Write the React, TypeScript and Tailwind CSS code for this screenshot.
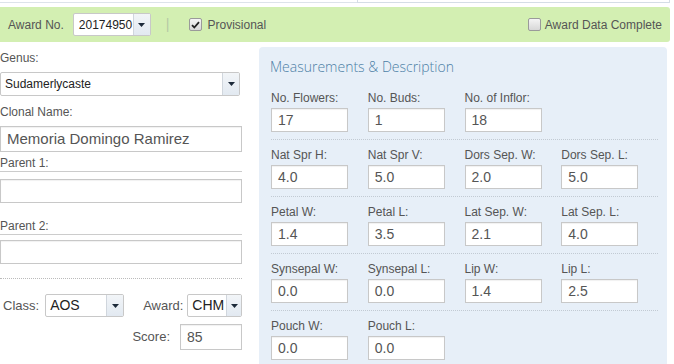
import React from "react";

const Caret = () => (
  <svg width="7" height="4" viewBox="0 0 7 4"><path d="M0 0h7L3.5 4z" fill="#1d2a3a" /></svg>
);

function Select({ value, w, h = 24, text = "text-[13px]", btn = 17, pl = "pl-[4px]" }: { value: string; w: string; h?: number; text?: string; btn?: number; pl?: string }) {
  return (
    <div className={`flex ${w} border border-[#c8c8c8] bg-white rounded-[2px] overflow-hidden`} style={{ height: h }}>
      <div className={`flex-1 flex items-center ${pl} ${text} text-[#222] overflow-hidden whitespace-nowrap`}>{value}</div>
      <div className="flex items-center justify-center border-l border-[#d0d6dd] bg-gradient-to-b from-[#f2f5f8] to-[#e2e9f1]" style={{ width: btn }}>
        <Caret />
      </div>
    </div>
  );
}

function Input({ value = "", w = "w-full", h = 24, text = "text-[14px]" }: { value?: string; w?: string; h?: number; text?: string }) {
  return (
    <div className={`${w} border border-[#c8c8c8] bg-white flex items-center pl-[6px] ${text} text-[#555] shadow-[inset_0_1px_1px_rgba(0,0,0,0.06)]`} style={{ height: h }}>
      {value}
    </div>
  );
}

function Checkbox({ checked }: { checked?: boolean }) {
  return (
    <div className="w-[13px] h-[13px] rounded-[2px] border border-[#9a9a9a] bg-gradient-to-b from-[#f4f4f4] to-[#d8d8d8] flex items-center justify-center">
      {checked && (
        <svg width="9" height="8" viewBox="0 0 9 8"><path d="M1 4.2l2.3 2.3L8 1.2" stroke="#222" strokeWidth="1.8" fill="none" /></svg>
      )}
    </div>
  );
}

const rows: [string, string][][] = [
  [["No. Flowers:", "17"], ["No. Buds:", "1"], ["No. of Inflor:", "18"]],
  [["Nat Spr H:", "4.0"], ["Nat Spr V:", "5.0"], ["Dors Sep. W:", "2.0"], ["Dors Sep. L:", "5.0"]],
  [["Petal W:", "1.4"], ["Petal L:", "3.5"], ["Lat Sep. W:", "2.1"], ["Lat Sep. L:", "4.0"]],
  [["Synsepal W:", "0.0"], ["Synsepal L:", "0.0"], ["Lip W:", "1.4"], ["Lip L:", "2.5"]],
  [["Pouch W:", "0.0"], ["Pouch L:", "0.0"]],
];

export default function App() {
  return (
    <div className="w-[674px] h-[364px] overflow-hidden bg-white text-[#555] font-['Liberation_Sans',Arial,sans-serif]">
      {/* top strip */}
      <div className="h-[7px] flex">
        <div className="flex-1 h-[3px] border-b border-[#dde3ea]" />
        <div className="w-[313px] h-[3px] border-l border-b border-r border-[#d5dde6] mr-[4px]" />
      </div>
      {/* green bar */}
      <div className="h-[35px] mr-[4px] bg-[#d3efb2] rounded-r-[3px] flex items-center text-[12px]">
        <span className="ml-[8px] text-[#555]">Award No.</span>
        <div className="ml-[9px]">
          <Select value="20174950" w="w-[78px]" h={23} text="text-[12px]" pl="pl-[5px]" btn={17} />
        </div>
        <span className="ml-[15px] text-[#b5c9a5] text-[14px]">|</span>
        <div className="ml-[20px]"><Checkbox checked /></div>
        <span className="ml-[5px] text-[#555]">Provisional</span>
        <div className="flex-1" />
        <Checkbox />
        <span className="ml-[4px] mr-[8px] text-[#555]">Award Data Complete</span>
      </div>

      <div className="flex mt-[5px]">
        {/* left column */}
        <div className="w-[242px] text-[12px]">
          <div className="h-[16px] leading-[16px] mt-[3px] mb-[6px]">Genus:</div>
          <Select value="Sudamerlycaste" w="w-[240px]" h={24} text="text-[12px]" btn={17} />
          <div className="h-[16px] leading-[16px] mt-[8px] mb-[6px]">Clonal Name:</div>
          <Input value="Memoria Domingo Ramirez" h={26} text="text-[15px]" />
          <div className="h-[17px] leading-[16px] mt-[3px] mb-[7px] border-b border-[#ccc]">Parent 1:</div>
          <Input h={24} />
          <div className="h-[17px] leading-[16px] mt-[15px] mb-[5px] border-b border-[#ccc]">Parent 2:</div>
          <Input h={24} />
          <div className="mt-[14px] border-b border-dotted border-[#bbb]" />
          <div className="flex items-center mt-[15px] h-[23px]">
            <span className="ml-[3px] text-[13px]">Class:</span>
            <div className="ml-[6px]"><Select value="AOS" w="w-[79px]" h={23} text="text-[14px]" btn={17} /></div>
            <span className="ml-[19px] text-[13px]">Award:</span>
            <div className="ml-[4px]"><Select value="CHM" w="w-[55px]" h={23} text="text-[14px]" btn={15} /></div>
          </div>
          <div className="flex items-center justify-end mt-[7px]">
            <span className="text-[13px] mr-[10px]">Score:</span>
            <Input value="85" w="w-[62px]" h={26} />
          </div>
        </div>

        {/* right panel */}
        <div className="ml-[17px] w-[408px] h-[330px] bg-[#e7eff8] rounded-t-[4px] pl-[12px] pr-[9px]">
          <div className="mt-[12px] ml-[-1px] text-[14px] leading-[16px] text-[#4d7fa6] font-['Open_Sans',sans-serif]" style={{ fontWeight: 300 }}>
            Measurements &amp; Description
          </div>
          <div className="mt-[15px]">
            {rows.map((row, i) => (
              <div key={i} className={`grid grid-cols-4 ${i > 0 ? "pt-[7px]" : ""} pb-[7px] ${i < rows.length - 1 ? "border-b border-dotted border-[#c2cad3]" : ""}`}>
                {row.map(([label, val]) => (
                  <div key={label}>
                    <div className="text-[12px] leading-[16px] mb-[2px]">{label}</div>
                    <Input value={val} w="w-[77px]" h={24} />
                  </div>
                ))}
              </div>
            ))}
          </div>
        </div>
      </div>
    </div>
  );
}
